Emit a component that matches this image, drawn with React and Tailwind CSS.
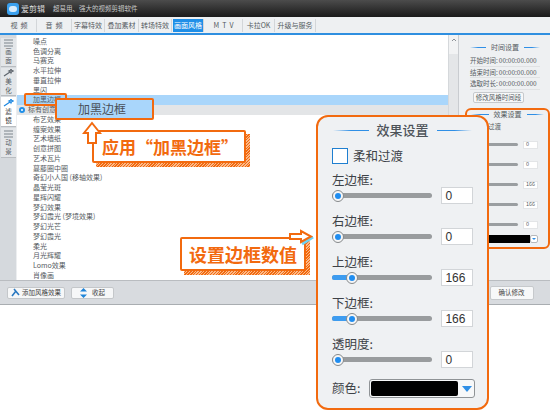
import React from 'react';

const cjk = { fontFamily: '"Noto Sans CJK SC", "Liberation Sans", sans-serif' };

const tabs = [
  { label: '视  频', w: 'w-[35px]' },
  { label: '音  频', w: 'w-[35px]' },
  { label: '字幕特效', w: 'w-[33px]' },
  { label: '叠加素材', w: 'w-[34px]' },
  { label: '转场特效', w: 'w-[33px]' },
  { label: '画面风格', w: 'w-[31px]', active: true },
  { label: 'M  T  V', w: 'w-[38px]' },
  { label: '卡拉OK', w: 'w-[32px]' },
  { label: '升级与服务', w: 'w-[41px]' },
];

const effects = [
  '噪点', '色调分离', '马赛克', '水平拉伸', '垂直拉伸', '黑闪', '加黑边框', '标有创意效果',
  '布艺效果', '缠案效果', '艺术墙纸', '创意拼图', '艺术瓦片', '蔓藤圈中圈', '奇幻小人国 (移轴效果)', '晶莹光斑',
  '星辉闪耀', '梦幻效果', '梦幻霞光 (梦境效果)', '梦幻光芒', '梦幻霞光', '柔光', '月光辉耀', 'Lomo效果', '肖像画',
];

const sideTabs = [
  { label: ['画', '面'], h: 'h-[29px]', mark: 'grid' },
  { label: ['美', '化'], h: 'h-[28px]', mark: 'wand' },
  { label: ['滤', '镜'], h: 'h-[30px]', mark: 'wand', active: true },
  { label: ['动', '景'], h: 'h-[30px]', mark: 'grid' },
];

const bigFields = [
  { label: '左边框:', value: '0', pct: 0 },
  { label: '右边框:', value: '0', pct: 0 },
  { label: '上边框:', value: '166', pct: 14 },
  { label: '下边框:', value: '166', pct: 14 },
  { label: '透明度:', value: '0', pct: 0 },
];

const smallValues = ['0', '0', '166', '166', '0'];

const HeadingLine = ({ flip }) => (
  <div className={`h-px flex-1 ${flip ? 'bg-linear-to-l' : 'bg-linear-to-r'} from-transparent via-[#2f8fe6] to-[#2f8fe6]`} />
);

const SideMark = ({ mark, active }) => (
  <svg width="11" height="8" viewBox="0 0 11 8" className="shrink-0">
    {mark === 'grid' ? (
      <path d="M1 1h9M1 4h9M1 7h9" stroke="#7d848c" strokeWidth="1.2" />
    ) : (
      <path d="M1 7 7 3M8 0l.6 1.4L10 2 8.6 2.600 8 4 7.400 2.600 6 2l1.400-.6z" stroke={active ? '#1d87e0' : '#5f666e'} strokeWidth="1.200" fill="none" />
    )}
  </svg>
);

const BigSlider = ({ pct }) => (
  <div className="relative h-[14px] w-[102px]">
    <div className="absolute left-0 right-0 top-[4.5px] h-[5px] rounded-full bg-[#999c9e]" />
    {pct > 0 && <div className="absolute left-0 top-[4.5px] h-[5px] rounded-full bg-[#3d9cf0]" style={{ width: pct + 4 }} />}
    <div
      className="absolute top-px flex h-[12px] w-[12px] items-center justify-center rounded-full border border-[#85898b] bg-[#f6f6f6]"
      style={{ left: pct }}
    >
      <div className="h-[6px] w-[6px] rounded-full bg-[#1f8df0]" />
    </div>
  </div>
);

const Hatch = ({ className }) => (
  <div className={`absolute bg-[repeating-linear-gradient(135deg,#f26a0f_0_1px,#fbb98a_1px_2px)] ${className}`} />
);

const App = () => {
  return (
    <div className="relative h-[411px] w-[550px] overflow-hidden bg-white text-[#555b61]" style={cjk}>
      {/* Main window */}
      <div className="flex h-[305px] flex-col overflow-hidden border-b border-[#a9adb1] bg-[#d8dce0]">
        <div className="flex h-[17px] shrink-0 items-center bg-linear-to-b from-[#4c4c4c] to-[#1b1b1b] pl-[7px]">
          <div className="mr-[2px] flex h-[12px] w-[12px] items-center justify-center rounded-[3px] bg-[#3aa0ee]">
            <div className="h-[6px] w-[8px] rounded-full bg-white/80" />
          </div>
          <span className="mr-[8px] text-[8px] leading-none text-[#d8d8d8]">爱剪辑</span>
          <span className="text-[6.5px] leading-none text-[#c9c9c9]">超易用、强大的视频剪辑软件</span>
        </div>

        <div className="flex h-[18px] shrink-0 items-center border-b-2 border-[#2f8fe0] bg-[#eef0f2] pl-[2px]">
          {tabs.map((tab) => (
            <div
              key={tab.label}
              className={`flex h-[13px] shrink-0 items-center justify-center whitespace-pre border-r border-[#d3d6d9] text-[7px] leading-none ${tab.w} ${
                tab.active ? 'mx-px bg-[#1f8fe8] text-white' : 'text-[#555b61]'
              }`}
            >
              {tab.label}
            </div>
          ))}
        </div>

        <div className="flex min-h-0 flex-1">
          <div className="flex min-w-0 flex-1 flex-col">
            <div className="flex min-h-0 flex-1 overflow-hidden">
              <div className="flex w-[17px] shrink-0 flex-col gap-px border-r border-[#eceef0] bg-[#d5d9dd] pl-px pt-[3px]">
                {sideTabs.map((tab) => (
                  <div
                    key={tab.label[0]}
                    className={`flex flex-col items-center justify-center border-b border-[#b9bdc1] text-[6.5px] leading-[9px] ${tab.h} ${
                      tab.active ? 'bg-white text-[#333]' : 'bg-[#e3e6e9]'
                    }`}
                  >
                    <SideMark mark={tab.mark} active={tab.active} />
                    <span>{tab.label[0]}</span>
                    <span>{tab.label[1]}</span>
                  </div>
                ))}
              </div>

              <div className="flex-1 bg-white pt-[1.500px]">
                {effects.map((name) => (
                  <div
                    key={name}
                    className={`relative flex h-[9.75px] items-center whitespace-nowrap text-[7px] leading-none ${
                      name === '加黑边框' ? 'bg-[#a9d6fb] pl-[16px]' : name === '标有创意效果' ? 'bg-[#e3e5e7] pl-[11px]' : 'pl-[16px]'
                    }`}
                  >
                    {name === '标有创意效果' && (
                      <div className="absolute left-[2px] h-[6px] w-[6px] rounded-full border-2 border-[#1f8fe8] bg-white" />
                    )}
                    {name}
                  </div>
                ))}
              </div>
              <div className="w-[10px] border-l border-[#d5d8db] bg-[#e4e6e8]">
                <div className="flex h-[19px] items-start justify-center bg-[#f2f3f4] pt-[2px]">
                  <svg width="8" height="6" viewBox="0 0 8 6">
                    <path d="M2 4l2-2 2 2" stroke="#8b9095" fill="none" />
                  </svg>
                </div>
              </div>
            </div>

            <div className="flex h-[24px] shrink-0 items-center gap-[6px] border-t border-[#b9bcc0] bg-[#d8dbdf] pl-[7px]">
              <button className="flex h-[12px] w-[58px] items-center justify-center gap-[2px] rounded-[2px] border border-[#c4c7ca] bg-[#f6f7f8] text-[6.5px] leading-none text-[#444]">
                <svg width="9" height="9" viewBox="0 0 9 9">
                  <path d="M1 8 5 3M3 1l5 6" stroke="#2a78c0" strokeWidth="1.6" />
                </svg>
                添加风格效果
              </button>
              <button className="flex h-[12px] w-[43px] items-center justify-center gap-[5px] rounded-[2px] border border-[#c4c7ca] bg-[#f6f7f8] text-[6.5px] leading-none text-[#444]">
                <svg width="7" height="10" viewBox="0 0 7 10">
                  <path d="M3.500 0 7 3.500H0zM3.500 10 7 6.500H0z" fill="#1f84d8" />
                </svg>
                收起
              </button>
            </div>
          </div>

          {/* Right settings column */}
          <div className="flex w-[92px] shrink-0 flex-col border-l border-[#c9ccd0] bg-[#eef0f2]">
            <div className="flex flex-col pl-[11px] pr-[10px] pt-[8px]">
              <div className="mb-[3px] flex items-center gap-[5px] text-[7px] leading-[9px]">
                <HeadingLine />
                时间设置
                <HeadingLine flip />
              </div>
              {['开始时间:', '结束时间:', '选取时长:'].map((label) => (
                <div key={label} className="flex h-[11.500px] items-center gap-px whitespace-nowrap border-b border-[#e0e2e4] text-[6.5px] leading-none">
                  <span>{label}</span>
                  <span>00:00:00.000</span>
                </div>
              ))}
              <button className="ml-[3px] mt-[2px] h-[11px] w-[51px] shrink-0 rounded-[2px] border border-[#c6c9cc] bg-[#f7f8f9] text-[6.5px] leading-none">
                修改风格时间段
              </button>
            </div>

            <div className="ml-[6px] mt-[5px] flex h-[141px] w-[85px] flex-col rounded-[6px] border-2 border-[#f26a0f]">
              <div className="flex items-center gap-[5px] px-[4px] text-[7px] leading-[9px]">
                <HeadingLine />
                效果设置
                <HeadingLine flip />
              </div>
              <div className="mt-[3px] pl-[8px] text-[6.5px] leading-[8px]">柔和过渡</div>
              <div className="mt-[11px] flex flex-col gap-[12px]">
                {smallValues.map((value, i) => (
                  <div key={i} className="flex h-[8px] items-center gap-[5px] pl-[2px]">
                    <div className="h-[3px] w-[49px] rounded-full bg-[#9a9ea1]" />
                    <div className="flex h-[8px] w-[15px] items-center border border-[#e3e5e7] bg-white pl-[2px] text-[5.500px] leading-none">
                      {value}
                    </div>
                  </div>
                ))}
              </div>
              <div className="mt-[6px] flex items-center pl-[2px]">
                <div className="h-[8px] w-[61px] bg-black" />
                <div className="flex h-[8px] w-[8px] items-center justify-center rounded-[2px] border border-[#b5b8bb] bg-white">
                  <div className="h-0 w-0 border-x-[2px] border-t-[2px] border-x-transparent border-t-[#2f8fe6]" />
                </div>
              </div>
            </div>

            <div className="mt-auto flex h-[24px] items-center justify-center border-t border-[#b9bcc0] bg-[#d8dbdf]">
              <button className="ml-[14px] h-[14px] w-[44px] rounded-[2px] border border-[#c6c9cc] bg-[#f7f8f9] text-[6.5px] leading-none text-[#444]">
                确认修改
              </button>
            </div>
          </div>
        </div>
      </div>

      {/* Small orange mark around the list row */}
      <div className="absolute left-[24px] top-[93px] h-[13px] w-[43px] rounded-[2px] border-2 border-[#f26a0f]" />

      {/* 加黑边框 popup */}
      <div className="absolute left-[55px] top-[98px] flex h-[22px] w-[99px] items-center rounded-[2px] border-2 border-[#f26a0f] bg-[#a9d6fb] pl-[21px] text-[12px] leading-none text-[#4a5058]">
        加黑边框
      </div>

      {/* Callout: apply */}
      <Hatch className="left-[96px] top-[134px] h-[33px] w-[154px]" />
      <div className="absolute left-[92px] top-[130px] flex h-[33px] w-[154px] items-center rounded-[2px] border-2 border-[#f26a0f] bg-white pl-[8px] text-[17px] font-bold leading-none text-[#f26a0f]">
        应用“加黑边框”
      </div>
      <svg className="absolute left-[82px] top-[121px]" width="20" height="26" viewBox="0 0 20 26">
        <path d="M10 2 18 12H14V22H6V12H2Z" fill="#fff" stroke="#f26a0f" strokeWidth="2" />
      </svg>

      {/* Callout: set values */}
      <Hatch className="left-[184px] top-[241px] h-[34px] w-[126px]" />
      <div className="absolute left-[180px] top-[237px] flex h-[34px] w-[126px] items-center justify-center rounded-[2px] border-2 border-[#f26a0f] bg-white text-[18px] font-bold leading-none text-[#f26a0f]">
        设置边框数值
      </div>
      <svg className="absolute left-[288px] top-[228px]" width="28" height="20" viewBox="0 0 28 20">
        <path d="M14 16 25 9" stroke="#6fd3f2" strokeWidth="3" />
        <path d="M2 6H13V3L23 8.500 13 14V11H2Z" fill="#fff" stroke="#f26a0f" strokeWidth="2" />
      </svg>

      {/* Zoomed effect settings panel */}
      <div className="absolute left-[316px] top-[115px] flex h-[295px] w-[173px] flex-col rounded-[12px] border-2 border-[#f26a0f] bg-[#eff1f3] px-[14px] pt-[5px]">
        <div className="flex items-center gap-[8px] px-px text-[13px] font-medium leading-[16px] text-[#4d5359]">
          <HeadingLine />
          效果设置
          <HeadingLine flip />
        </div>
        <div className="mt-[10px] flex items-center gap-[5px] text-[12.5px] leading-[16px] text-[#3d4247]">
          <div className="h-[16px] w-[16px] border border-[#1f7fd0] bg-white" />
          柔和过渡
        </div>
        <div className="mt-[8px] flex flex-col gap-[9px]">
          {bigFields.map((field) => (
            <div key={field.label} className="flex h-[32px] flex-col">
              <div className="h-[15px] text-[12.5px] leading-[15px] text-[#3d4247]">{field.label}</div>
              <div className="flex h-[17px] items-center gap-[9px]">
                <BigSlider pct={field.pct} />
                <div className="flex h-[17px] w-[32px] items-center border border-[#d2d5d8] bg-white pl-[3px] text-[12px] leading-none text-[#333]" style={{ fontFamily: '"Liberation Sans", sans-serif' }}>
                  {field.value}
                </div>
              </div>
            </div>
          ))}
        </div>
        <div className="mt-[11px] flex items-center text-[12.5px] leading-none text-[#3d4247]">
          <span className="w-[37px] shrink-0 whitespace-nowrap">颜色:</span>
          <div className="flex h-[19px] w-[106px] shrink-0 items-center rounded-[3px] border border-[#8f9396] bg-[#f7f8f9] pl-px">
            <div className="h-[15px] w-[87px] rounded-[2px] bg-black" />
            <svg width="12" height="8" viewBox="0 0 12 8" className="ml-[3px]">
              <path d="M1 1h10L6 7z" fill="#2f8fe6" />
            </svg>
          </div>
        </div>
      </div>
    </div>
  );
};

export default App;
